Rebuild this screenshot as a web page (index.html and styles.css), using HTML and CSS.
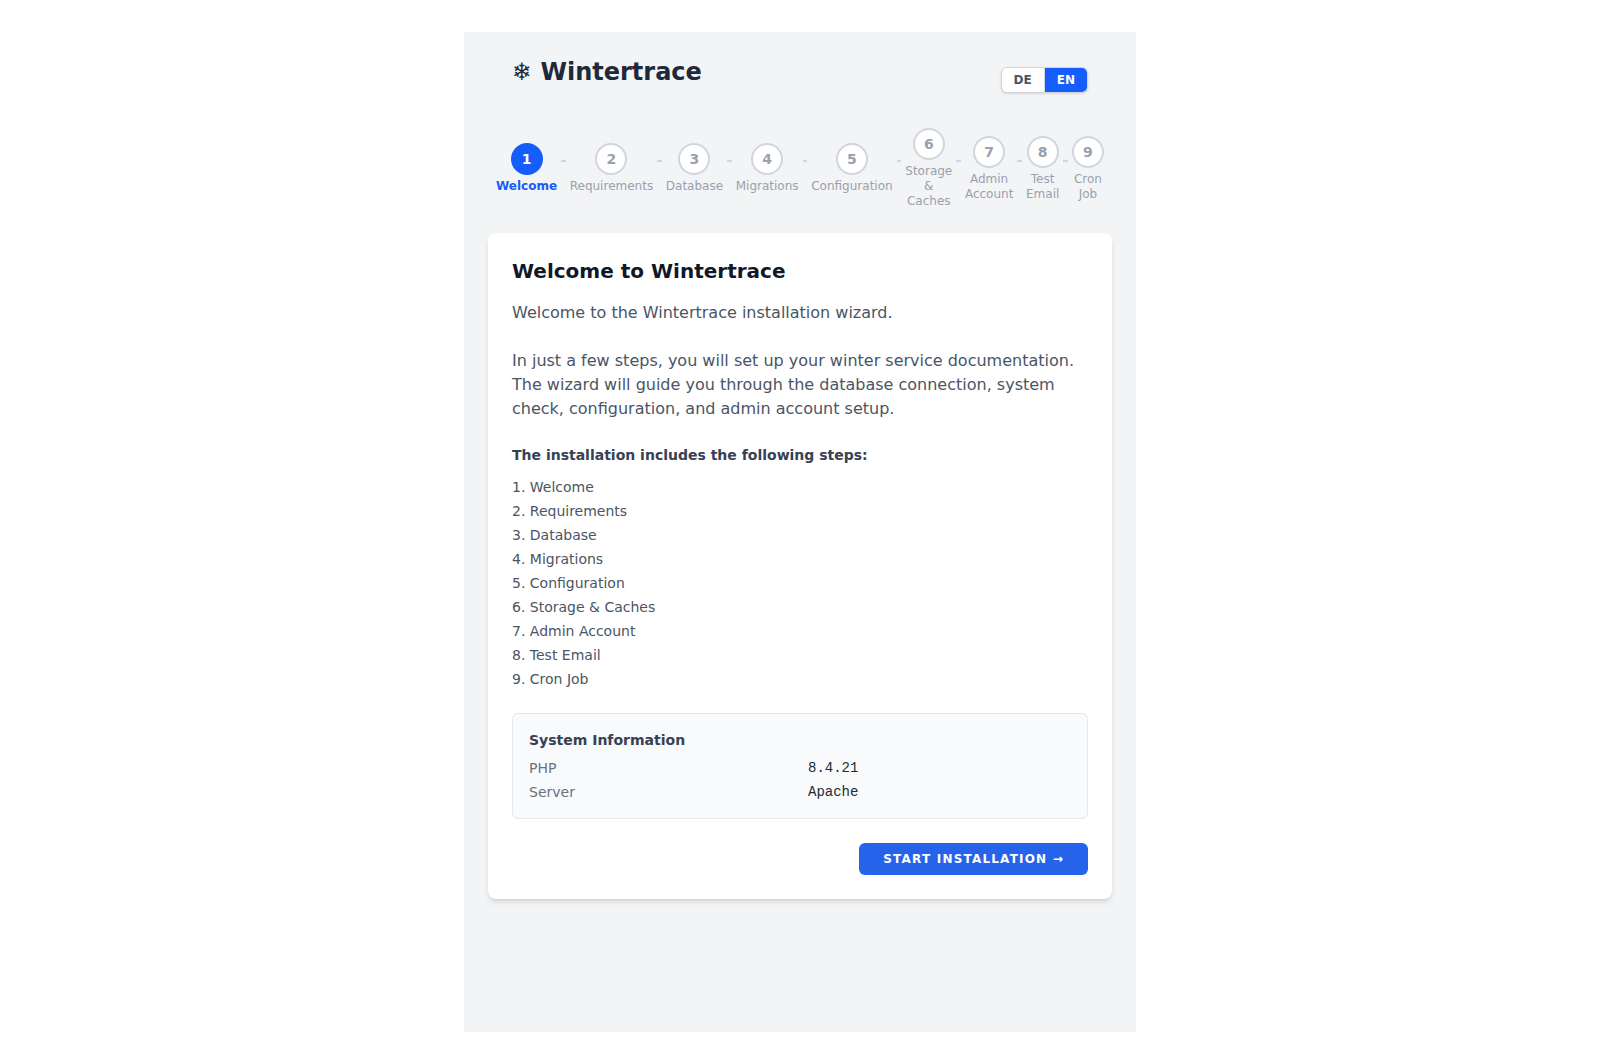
FILE: index.html
```html
<!DOCTYPE html>
<html lang="en">
<head>
  <meta charset="UTF-8">
  <meta name="viewport" content="width=device-width, initial-scale=1.0">
  <title>Wintertrace</title>
  <link rel="stylesheet" href="styles.css">
</head>
<body>
  <div class="installer">
    <header class="header">
      <h1>❄ Wintertrace</h1>
      <nav class="lang-switch">
        <a href="?lang=de">DE</a>
        <a href="?lang=en" class="active">EN</a>
      </nav>
    </header>

    <div class="stepper">
      <div class="step active"><span class="circle">1</span><span class="label">Welcome</span></div>
      <div class="connector"></div>
      <div class="step"><span class="circle">2</span><span class="label">Requirements</span></div>
      <div class="connector"></div>
      <div class="step"><span class="circle">3</span><span class="label">Database</span></div>
      <div class="connector"></div>
      <div class="step"><span class="circle">4</span><span class="label">Migrations</span></div>
      <div class="connector"></div>
      <div class="step"><span class="circle">5</span><span class="label">Configuration</span></div>
      <div class="connector"></div>
      <div class="step"><span class="circle">6</span><span class="label">Storage &amp; Caches</span></div>
      <div class="connector"></div>
      <div class="step"><span class="circle">7</span><span class="label">Admin Account</span></div>
      <div class="connector"></div>
      <div class="step"><span class="circle">8</span><span class="label">Test Email</span></div>
      <div class="connector"></div>
      <div class="step"><span class="circle">9</span><span class="label">Cron Job</span></div>
    </div>

    <main class="card">
      <h2>Welcome to Wintertrace</h2>
      <p>Welcome to the Wintertrace installation wizard.</p>
      <p>In just a few steps, you will set up your winter service documentation. The wizard will guide you through the database connection, system check, configuration, and admin account setup.</p>

      <h3>The installation includes the following steps:</h3>
      <ol class="step-list">
        <li>Welcome</li>
        <li>Requirements</li>
        <li>Database</li>
        <li>Migrations</li>
        <li>Configuration</li>
        <li>Storage &amp; Caches</li>
        <li>Admin Account</li>
        <li>Test Email</li>
        <li>Cron Job</li>
      </ol>

      <section class="system-info">
        <h3>System Information</h3>
        <dl>
          <dt>PHP</dt>
          <dd>8.4.21</dd>
          <dt>Server</dt>
          <dd>Apache</dd>
        </dl>
      </section>

      <div class="actions">
        <button type="button" class="btn-primary">Start Installation →</button>
      </div>
    </main>
  </div>
</body>
</html>
```

FILE: styles.css
```css
* {
  box-sizing: border-box;
  margin: 0;
  padding: 0;
}

body {
  padding: 32px;
  background-color: #fff;
  font-family: "DejaVu Sans", sans-serif;
  font-size: 16px;
  line-height: 24px;
  color: #4a5565;
}

.installer {
  max-width: 672px;
  min-height: calc(100vh - 64px);
  margin: 0 auto;
  padding: 24px;
  background-color: #f3f4f6;
}

.header {
  display: flex;
  justify-content: space-between;
  align-items: center;
  padding: 0 24px;
  margin-bottom: 24px;
}

.header h1 {
  margin-bottom: 16px;
  font-size: 24px;
  line-height: 32px;
  color: #1e2939;
}

.lang-switch {
  display: flex;
  overflow: hidden;
  border: 1px solid #d1d5dc;
  border-radius: 6px;
  background-color: #fff;
  box-shadow: 0 1px 3px rgba(0, 0, 0, 0.1), 0 1px 2px -1px rgba(0, 0, 0, 0.1);
}

.lang-switch a {
  padding: 4px 12px;
  font-size: 12px;
  font-weight: bold;
  line-height: 16px;
  color: #4a5565;
  text-decoration: none;
}

.lang-switch a.active {
  border-left: 1px solid #d1d5dc;
  background-color: #155dfc;
  background-clip: padding-box;
  color: #fff;
}

/* Progress steps */
.stepper {
  display: flex;
  align-items: center;
  padding: 0 8px;
  margin-bottom: 24px;
}

.step {
  display: flex;
  flex-direction: column;
  align-items: center;
  width: min-content;
}

.circle {
  display: flex;
  align-items: center;
  justify-content: center;
  width: 32px;
  height: 32px;
  border: 2px solid #d1d5dc;
  border-radius: 50%;
  background-color: #fff;
  font-size: 14px;
  font-weight: bold;
  line-height: 20px;
  color: #99a1af;
}

.label {
  margin-top: 4px;
  font-size: 12px;
  line-height: 15px;
  text-align: center;
  color: #99a1af;
}

.step.active .circle {
  border-color: #155dfc;
  background-color: #155dfc;
  color: #fff;
}

.step.active .label {
  font-weight: bold;
  color: #155dfc;
}

.connector {
  flex: 1;
  height: 2px;
  margin: 0 4px 16px;
  background-color: #d1d5dc;
}

/* Content */
.card {
  padding: 24px;
  border-radius: 8px;
  background-color: #fff;
  box-shadow: 0 4px 6px -1px rgba(0, 0, 0, 0.1), 0 2px 4px -2px rgba(0, 0, 0, 0.1);
}

.card h2 {
  margin-bottom: 16px;
  font-size: 20px;
  line-height: 28px;
  color: #101828;
}

.card p {
  margin-bottom: 24px;
}

.card h3 {
  font-size: 14px;
  line-height: 20px;
  color: #364153;
}

.step-list {
  display: flex;
  flex-direction: column;
  gap: 4px;
  margin: 12px 0 24px;
  list-style-position: inside;
  font-size: 14px;
  line-height: 20px;
}

.system-info {
  padding: 16px;
  margin-bottom: 24px;
  border: 1px solid #e5e7eb;
  border-radius: 6px;
  background-color: #f9fafb;
}

.system-info dl {
  display: grid;
  grid-template-columns: 1fr 1fr;
  gap: 4px 16px;
  margin-top: 8px;
  font-size: 14px;
  line-height: 20px;
}

.system-info dt {
  color: #6a7282;
}

.system-info dd {
  font-family: "Liberation Mono", monospace;
  color: #1e2939;
}

.actions {
  display: flex;
  justify-content: flex-end;
}

.btn-primary {
  padding: 8px 24px;
  border: none;
  border-radius: 6px;
  background-color: #2563eb;
  font-family: inherit;
  font-size: 12px;
  font-weight: bold;
  line-height: 16px;
  letter-spacing: 0.1em;
  text-transform: uppercase;
  color: #fff;
  cursor: pointer;
}

.btn-primary:hover {
  background-color: #1d4ed8;
}
```
